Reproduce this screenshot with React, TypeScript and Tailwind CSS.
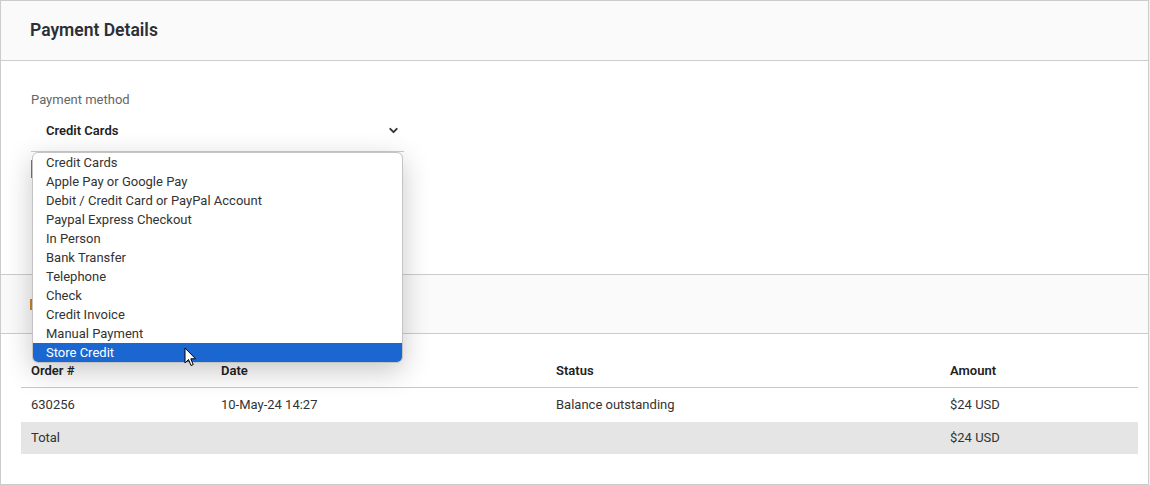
import { ChevronDown } from 'lucide-react';

const methods = [
    'Credit Cards',
    'Apple Pay or Google Pay',
    'Debit / Credit Card or PayPal Account',
    'Paypal Express Checkout',
    'In Person',
    'Bank Transfer',
    'Telephone',
    'Check',
    'Credit Invoice',
    'Manual Payment',
    'Store Credit',
];

function Cursor() {
    return (
        <svg width="13" height="20" viewBox="0 0 13 20" className="absolute left-[184px] top-[347px]">
            <path d="M1 1 L1 16 L4.5 12.5 L7 18.5 L9.2 17.6 L6.8 11.8 L11.5 11.8 Z" fill="#fff" stroke="#000" strokeWidth="1" strokeLinejoin="round" />
        </svg>
    );
}

export default function App() {
    return (
        <div className="relative w-[1150px] h-[485px] bg-[#f2f2f2] text-[13px] text-[#333]" style={{ fontFamily: 'Roboto, "Liberation Sans", sans-serif' }}>
            <div className="w-[1149px] h-[485px] bg-white border border-[#cccccc] flex flex-col">
                {/* Header */}
                <div className="h-[60px] shrink-0 bg-[#fafafa] border-b border-[#cccccc] flex items-center px-[29px]">
                    <h2 className="text-[17.5px] font-semibold text-[#2b2f38]">Payment Details</h2>
                </div>

                {/* Payment method */}
                <div className="h-[213px] shrink-0 px-[30px] pt-[30px]">
                    <div className="h-[18px] leading-[18px] text-[#666]">Payment method</div>
                    <div className="mt-[1px] w-[373px] h-[42px] border-b border-[#cccccc] flex items-center justify-between pl-[15px] pr-[4px]">
                        <span className="font-semibold text-[#222]">Credit Cards</span>
                        <ChevronDown size={13} strokeWidth={3.5} className="text-[#333]" />
                    </div>
                    {/* field hidden under the open list */}
                    <div className="mt-[8px] w-[16px] h-[18px] border-l-2 border-[#777]" />
                </div>

                {/* Second section header */}
                <div className="h-[60px] shrink-0 bg-[#fafafa] border-y border-[#cccccc] flex items-center px-[29px]">
                    <div className="w-[14px] h-[11px] border-l-[3px] border-[#c8862a]" />
                </div>

                {/* Table */}
                <div className="pl-[20px] pr-[10px] pt-[19px]">
                    <div className="grid grid-cols-[200px_335px_394px_1fr] pt-[9px] pb-[7px] border-b border-[#c8c8c8] font-semibold leading-[18px] text-[#222]">
                        <div className="pl-[10px]">Order #</div>
                        <div>Date</div>
                        <div>Status</div>
                        <div>Amount</div>
                    </div>
                    <div className="grid grid-cols-[200px_335px_394px_1fr] h-[34px] items-center">
                        <div className="pl-[10px]">630256</div>
                        <div>10-May-24 14:27</div>
                        <div>Balance outstanding</div>
                        <div>$24 USD</div>
                    </div>
                    <div className="grid grid-cols-[200px_335px_394px_1fr] h-[32px] items-center bg-[#e5e5e5]">
                        <div className="pl-[10px]">Total</div>
                        <div></div>
                        <div></div>
                        <div>$24 USD</div>
                    </div>
                </div>
            </div>

            {/* Open select list */}
            <div className="absolute left-[32px] top-[152px] w-[371px] rounded-[6px] border border-[#c4c4c4] bg-white overflow-hidden shadow-[0_8px_28px_rgba(0,0,0,0.22)]">
                {methods.map((m) => (
                    <div
                        key={m}
                        className={`h-[19px] leading-[19px] pl-[13px] ${m === 'Store Credit' ? 'bg-[#1a67d2] text-white' : 'text-[#333]'}`}
                    >
                        {m}
                    </div>
                ))}
            </div>
            <Cursor />
        </div>
    );
}
